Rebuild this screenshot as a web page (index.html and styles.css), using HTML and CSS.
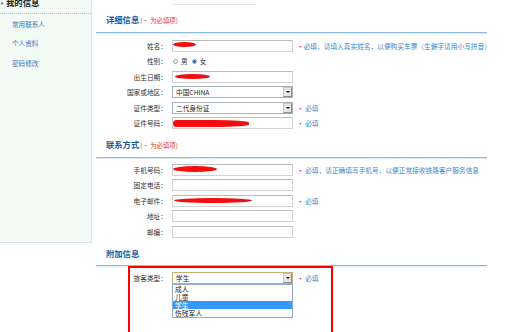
FILE: index.html
```html
<!DOCTYPE html>
<html lang="zh-CN">
<head>
<meta charset="utf-8">
<title>我的信息</title>
<link rel="stylesheet" href="styles.css">
</head>
<body>
<div class="page">
  <aside class="side">
    <div class="side-head"><span class="side-arrow">▸</span><span class="side-title">我的信息</span></div>
    <ul class="menu">
      <li>常用联系人</li>
      <li>个人资料</li>
      <li>密码修改</li>
    </ul>
  </aside>
  <main class="main">
    <div class="topbar"></div>

    <section class="sec">
      <h2 class="sec-title t1">详细信息<span class="req">(• 为必填项)</span></h2>
      <div class="rows r1">
        <div class="row"><span class="lbl">姓名：</span><span class="ctl inp"><span class="scr scr-name"></span></span><span class="hint"><span class="dot">•</span>必填，请填入真实姓名，以便购买车票（生僻字请用小写拼音）</span></div>
        <div class="row"><span class="lbl">性别：</span><span class="ctl radios"><span class="radio"></span><span class="rt">男</span><span class="radio on"></span><span class="rt">女</span></span></div>
        <div class="row"><span class="lbl">出生日期：</span><span class="ctl inp"><span class="scr scr-birth"></span></span></div>
        <div class="row"><span class="lbl">国家或地区：</span><span class="ctl sel"><span class="sel-text">中国CHINA</span><span class="arrow"></span></span></div>
        <div class="row"><span class="lbl">证件类型：</span><span class="ctl sel"><span class="sel-text">二代身份证</span><span class="arrow"></span></span><span class="hint"><span class="dot">•</span> 必填</span></div>
        <div class="row"><span class="lbl">证件号码：</span><span class="ctl inp"><span class="scr scr-id"></span></span><span class="hint"><span class="dot">•</span> 必填</span></div>
      </div>
    </section>

    <section class="sec">
      <h2 class="sec-title t2">联系方式<span class="req">(• 为必填项)</span></h2>
      <div class="rows r2">
        <div class="row"><span class="lbl">手机号码：</span><span class="ctl inp"><span class="scr scr-mobile"></span></span><span class="hint"><span class="dot">•</span> 必填，请正确填写手机号，以便正常接收铁路客户服务信息</span></div>
        <div class="row"><span class="lbl">固定电话：</span><span class="ctl inp"></span></div>
        <div class="row"><span class="lbl">电子邮件：</span><span class="ctl inp"><span class="scr scr-mail"></span></span><span class="hint"><span class="dot">•</span> 必填</span></div>
        <div class="row"><span class="lbl">地址：</span><span class="ctl inp"></span></div>
        <div class="row"><span class="lbl">邮编：</span><span class="ctl inp"></span></div>
      </div>
    </section>

    <section class="sec">
      <h2 class="sec-title t3">附加信息</h2>
      <div class="hilite">
        <div class="row"><span class="lbl lbl-short">旅客类型：</span><span class="ctl sel sel-focus"><span class="sel-text">学生</span><span class="arrow"></span>
          <span class="opts">
            <span class="opt">成人</span>
            <span class="opt">儿童</span>
            <span class="opt active">学生</span>
            <span class="opt">伤残军人</span>
          </span>
        </span><span class="hint"><span class="dot">•</span> 必填</span></div>
      </div>
    </section>
  </main>
</div>
</body>
</html>
```

FILE: styles.css
```css
html, body {
  margin: 0;
  padding: 0;
}
body {
  width: 507px;
  height: 332px;
  overflow: hidden;
  background: #fff;
  font-family: "Noto Sans CJK SC", "Liberation Sans", sans-serif;
  color: #333;
}
.page {
  display: flex;
  align-items: flex-start;
}

/* sidebar */
.side {
  flex: none;
  width: 92px;
  height: 243px;
  box-sizing: border-box;
  background: #f2faf6;
  border-right: 1px solid #dbe6ea;
  border-bottom: 1px solid #dde4e6;
  overflow: hidden;
}
.side-head {
  height: 13px;
  border-bottom: 1px dotted #b8c2c2;
  display: flex;
  align-items: flex-start;
  padding-left: 1px;
  overflow: hidden;
}
.side-arrow {
  font-size: 6px;
  line-height: 8px;
  margin-top: -1px;
  color: #6a8cab;
  width: 5px;
}
.side-title {
  font-size: 8.4px;
  line-height: 8px;
  margin-top: -2px;
  font-weight: bold;
  color: #222;
}
.menu {
  list-style: none;
  margin: 0;
  padding: 1px 0 0 12px;
}
.menu li {
  height: 19.3px;
  line-height: 19.3px;
  font-size: 6.6px;
  color: #3b74b8;
}

/* main */
.main {
  flex: none;
  width: 391px;
  margin-left: 4px;
}
.topbar {
  height: 4px;
  width: 85px;
  margin-left: 75px;
  border-bottom: 1px solid #e6e6e6;
}
.sec-title {
  margin: 0;
  padding: 8px 0 6px 10px;
  line-height: 10px;
  font-size: 8.3px;
  font-weight: bold;
  color: #1f5c9c;
  border-bottom: 1px solid #8dbbe6;
  box-shadow: 0 1px 0 #dcebf7;
}
.sec-title.t1 { padding-top: 8.5px; padding-bottom: 6.5px; }
.sec-title.t3 { padding-top: 8.5px; padding-bottom: 7px; }
.req {
  font-size: 6.4px;
  font-weight: normal;
  color: #e8322e;
  margin-left: 1px;
}
.rows.r1 { padding-top: 5px; }
.rows.r2 { padding-top: 4px; }

.row {
  display: flex;
  align-items: center;
  height: 15.5px;
}
.lbl {
  flex: none;
  width: 71px;
  text-align: right;
  font-size: 6.7px;
  line-height: 10px;
  color: #333;
}
.lbl-short { width: 37px; }
.ctl {
  flex: none;
  width: 121px;
  height: 12px;
  margin-left: 5px;
  box-sizing: border-box;
}
.hint {
  margin-left: 4px;
  font-size: 6.7px;
  line-height: 10px;
  color: #3a87cc;
  white-space: nowrap;
}
.hint .dot { color: #f00; }

/* text input */
.inp {
  display: flex;
  align-items: center;
  background: #fff;
  border: 1px solid #d2d2d2;
  border-top-color: #bdbdbd;
  overflow: hidden;
}
.scr {
  flex: none;
  display: block;
  height: 5px;
  background: #f50d0d;
  border-radius: 50%;
}
.scr-name { width: 23px; margin-left: 0; margin-bottom: 3px; }
.scr-birth { width: 35px; margin-left: 2px; }
.scr-id { width: 76px; height: 7px; border-radius: 4px 40px 40px 4px / 4px 3px 3px 4px; }
.scr-mobile { width: 44px; height: 6px; margin-bottom: 1px; }
.scr-mail { width: 78px; margin-left: 1px; margin-bottom: 1px; }

/* radios */
.radios {
  display: flex;
  align-items: center;
  font-size: 6.7px;
  line-height: 10px;
  color: #333;
}
.radio {
  flex: none;
  width: 5px;
  height: 5px;
  box-sizing: border-box;
  border: 1px solid #9aa3aa;
  border-radius: 50%;
  background: #f4f4f4;
  margin-left: 1px;
  margin-right: 3px;
  position: relative;
}
.radio.on {
  margin-left: 4px;
  border-color: #7d9cbc;
  background: radial-gradient(circle, #2766c2 0 1.2px, #e9eef4 1.6px);
}

/* select */
.sel {
  display: flex;
  align-items: center;
  position: relative;
  background: #fff;
  border: 1px solid #a9b1b8;
  font-size: 6.7px;
  line-height: 10px;
  color: #222;
}
.sel-text { padding-left: 3px; }
.arrow {
  margin-left: auto;
  width: 9px;
  height: 10px;
  box-sizing: border-box;
  background: #e6e6e6;
  border: 1px solid #8d8d8d;
  border-top-color: #c4c4c4;
  border-left-color: #c4c4c4;
  display: flex;
  align-items: center;
  justify-content: center;
}
.arrow::after {
  content: "";
  width: 0;
  height: 0;
  border-left: 2px solid transparent;
  border-right: 2px solid transparent;
  border-top: 2px solid #111;
}
.sel-focus { border-color: #c9ad72; }
.opts {
  position: absolute;
  left: -1px;
  top: 10.5px;
  width: 121px;
  box-sizing: border-box;
  border: 1px solid #8fa9c4;
  background: #fff;
  display: flex;
  flex-direction: column;
  z-index: 2;
}
.opt {
  height: 8px;
  line-height: 8px;
  padding-left: 2px;
  font-size: 6.8px;
  color: #222;
}
.opt.active {
  background: #3399ff;
  color: #fff;
}

/* highlighted region */
.hilite {
  margin-left: 32px;
  width: 205px;
  height: 80px;
  box-sizing: border-box;
  border: 2px solid #f00;
  padding-top: 2.5px;
}
```
